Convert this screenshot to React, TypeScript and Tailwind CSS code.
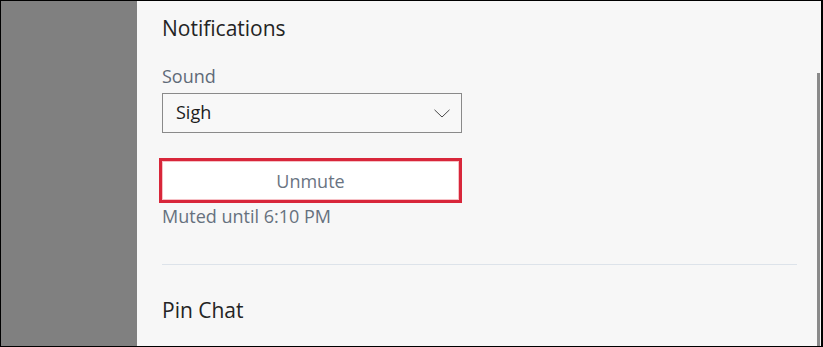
import React from "react";

export default function App() {
  const font = { fontFamily: '"Open Sans", "Noto Sans", sans-serif' };
  return (
    <div
      className="w-[823px] h-[347px] flex border-t border-l border-b border-r-2 border-black overflow-hidden bg-[#f7f7f7]"
      style={font}
    >
      <div className="w-[136px] shrink-0 bg-[#808080]" />
      <div className="flex-1 flex bg-[#f7f7f7]">
        <div className="w-[635px] ml-[25px] pt-[13px] flex flex-col">
          <div className="text-[21px] leading-[28px] text-[#242424]">Notifications</div>
          <div className="mt-[22px] text-[18px] leading-[24px] text-[#5f6a78]">Sound</div>
          <div className="mt-[5px] w-[300px] h-[40px] border border-[#8a8a8a] bg-[#f8f8f8] flex items-center justify-between pl-[13px] pr-[11px] pb-[3px]">
            <span className="text-[18px] leading-[24px] text-[#1c1c1c]">Sigh</span>
            <svg width="16" height="9" viewBox="0 0 16 9" className="mt-[3px]">
              <polyline points="0.5,0.8 8,8 15.5,0.8" fill="none" stroke="#4a4a4a" strokeWidth="1" />
            </svg>
          </div>
          <button className="mt-[25px] -ml-[3px] w-[303px] h-[45px] border-[3px] border-[#d8263a] bg-white shadow-[inset_0_0_0_1px_#f6c1c6] flex items-center justify-center text-[18px] leading-[24px] text-[#6a7482]">
            Unmute
          </button>
          <div className="mt-[1px] text-[18px] leading-[24px] text-[#66717e]">Muted until 6:10 PM</div>
          <div className="mt-[36px] h-px bg-[#dde3ea]" />
          <div className="mt-[31px] text-[21px] leading-[28px] text-[#242424]">Pin Chat</div>
        </div>
        <div className="flex-1" />
        <div className="w-[3px] mr-[1px] pt-[72px] flex flex-col">
          <div className="flex-1 bg-[#8a8a8a]" />
        </div>
      </div>
    </div>
  );
}
